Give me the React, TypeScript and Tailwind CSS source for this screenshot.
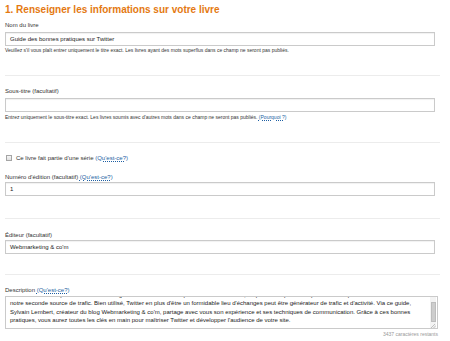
import React from "react";

const Link = ({ children }: { children: React.ReactNode }) => (
  <span className="text-[#1d5fa3] underline decoration-dotted decoration-[#1d5fa3] underline-offset-[1px]">
    {children}
  </span>
);

const Field = ({ value }: { value?: string }) => (
  <div className="w-[430px] h-[14px] border border-[#cacaca] shadow-[inset_0_1px_1px_rgba(0,0,0,0.06)] bg-white pl-[4px] text-[6px] leading-[12px] text-[#222]">
    {value}
  </div>
);

const Separator = ({ mt }: { mt: string }) => (
  <div className={`w-[435px] h-px bg-[#ececec] ${mt}`} />
);

export default function App() {
  const descriptionLines = [
    "Twitter est devenu pour de nombreux blogs et sites une véritable plateforme de diffusion, au point de représenter pour beaucoup d'entre eux",
    "notre seconde source de trafic. Bien utilisé, Twitter en plus d'être un formidable lieu d'échanges peut être générateur de trafic et d'activité. Via ce guide,",
    "Sylvain Lembert, créateur du blog Webmarketing & co'm, partage avec vous son expérience et ses techniques de communication. Grâce à ces bonnes",
    "pratiques, vous aurez toutes les clés en main pour maîtriser Twitter et développer l'audience de votre site.",
  ];

  return (
    <div className="w-[450px] h-[341px] overflow-hidden bg-white pl-[5px] font-['Liberation_Sans',Arial,sans-serif] text-[#333]">
      <h1 className="mt-[3px] h-[14px] text-[10px] leading-[14px] font-bold text-[#e47911] whitespace-nowrap">
        1. Renseigner les informations sur votre livre
      </h1>

      {/* Nom du livre */}
      <div className="mt-[4px] h-[8px] text-[6px] leading-[8px]">Nom du livre</div>
      <div className="mt-[3px]">
        <Field value="Guide des bonnes pratiques sur Twitter" />
      </div>
      <div className="mt-[1px] h-[7px] text-[5px] leading-[7px] whitespace-nowrap">
        Veuillez s'il vous plaît entrer uniquement le titre exact. Les livres ayant des mots superflus dans ce champ ne seront pas publiés.
      </div>
      <Separator mt="mt-[21px]" />

      {/* Sous-titre */}
      <div className="mt-[11px] h-[8px] text-[6px] leading-[8px]">Sous-titre (facultatif)</div>
      <div className="mt-[3px]">
        <Field />
      </div>
      <div className="mt-[2px] h-[7px] text-[5px] leading-[7px] whitespace-nowrap">
        Entrez uniquement le sous-titre exact. Les livres soumis avec d'autres mots dans ce champ ne seront pas publiés.{" "}
        <Link>(Pourquoi ?)</Link>
      </div>
      <Separator mt="mt-[21px]" />

      {/* Série */}
      <div className="mt-[11px] h-[8px] flex items-center gap-[4px] text-[6px] leading-[8px]">
        <span className="ml-[1px] w-[6px] h-[6px] border border-[#a5a5a5] bg-gradient-to-b from-[#f6f6f6] to-[#e0e0e0]" />
        <span>
          Ce livre fait partie d'une série <Link>(Qu'est-ce?)</Link>
        </span>
      </div>

      {/* Numéro d'édition */}
      <div className="mt-[11px] h-[8px] text-[6px] leading-[8px]">
        Numéro d'édition (facultatif) <Link>(Qu'est-ce?)</Link>
      </div>
      <div className="mt-[1px]">
        <Field value="1" />
      </div>
      <Separator mt="mt-[22px]" />

      {/* Éditeur */}
      <div className="mt-[12px] h-[8px] text-[6px] leading-[8px]">Éditeur (facultatif)</div>
      <div className="mt-[1px]">
        <Field value="Webmarketing & co'm" />
      </div>
      <Separator mt="mt-[20px]" />

      {/* Description */}
      <div className="mt-[11px] h-[8px] text-[6px] leading-[8px]">
        Description <Link>(Qu'est-ce?)</Link>
      </div>
      <div className="mt-[2px] w-[433px] h-[33px] border border-[#cacaca] flex bg-white">
        <div className="flex-1 overflow-hidden">
          <div className="-mt-[6px] pl-[4px] text-[6px] leading-[8.3px] text-[#222]">
            {descriptionLines.map((line, i) => (
              <div key={i} className="whitespace-nowrap">
                {line}
              </div>
            ))}
          </div>
        </div>
        <div className="w-[6px] mr-[1px] flex flex-col bg-[#f3f3f3]">
          <div className="h-[5px]" />
          <div className="h-[20px] mx-[0.5px] bg-[#cdcdcd] border border-[#bdbdbd]" />
          <div className="flex-1" />
          <svg width="6" height="4" viewBox="0 0 6 4" className="block">
            <path d="M1 4 L6 -1 M3.5 4 L6 1.5" stroke="#a9a9a9" strokeWidth="0.7" />
          </svg>
        </div>
      </div>
      <div className="mt-[1.5px] w-[433px] h-[7px] text-right text-[5px] leading-[7px] text-[#999]">
        3437 caractères restants
      </div>
    </div>
  );
}
